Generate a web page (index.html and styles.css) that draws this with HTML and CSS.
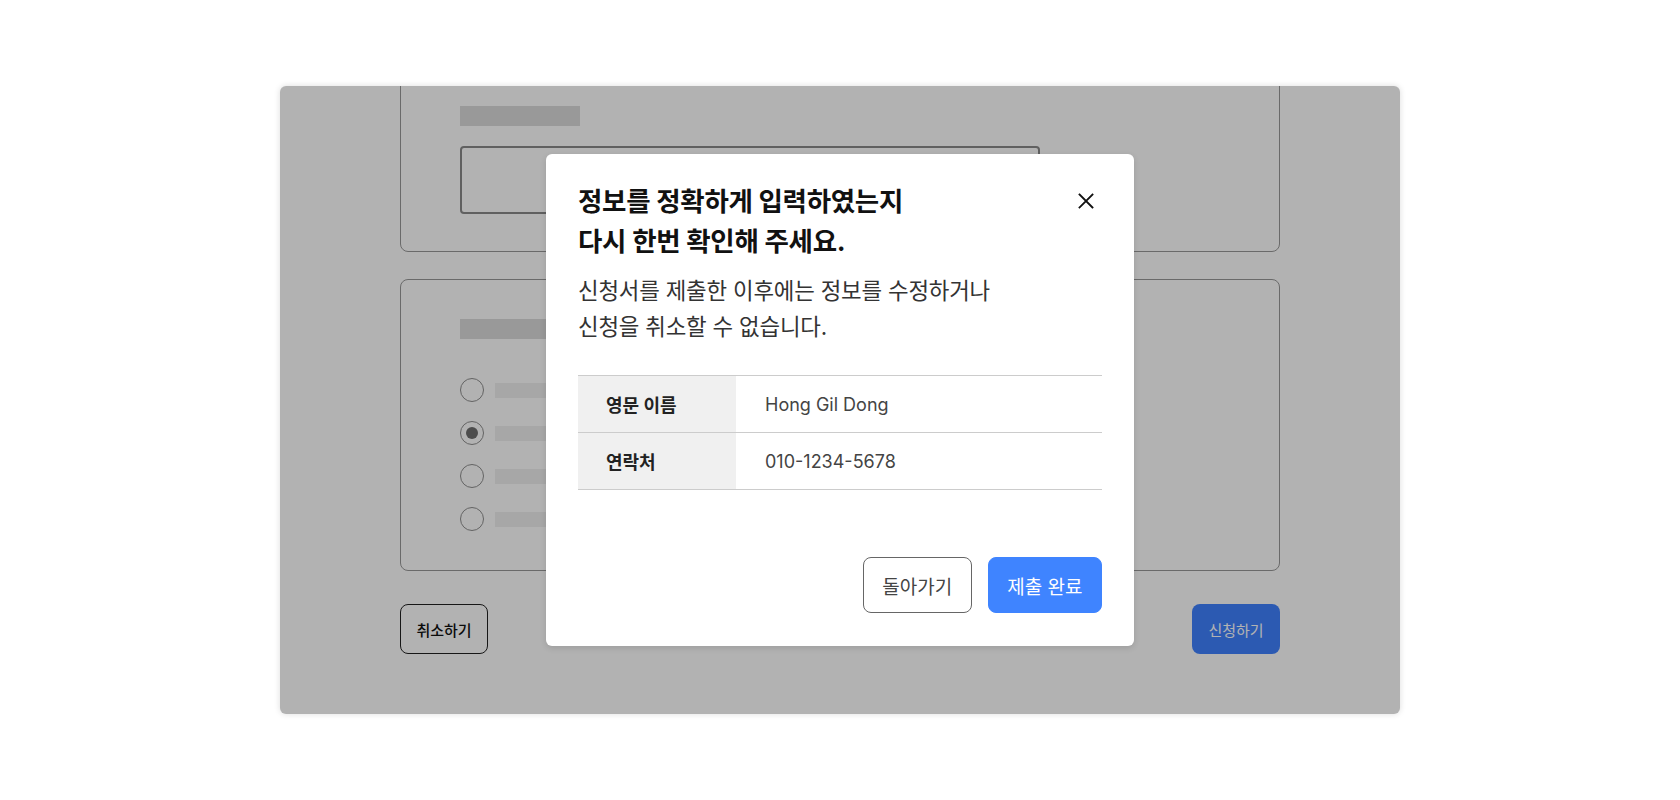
FILE: index.html
```html
<!DOCTYPE html>
<html lang="ko">
<head>
<meta charset="utf-8">
<title>신청서 제출 확인</title>
<link rel="stylesheet" href="styles.css">
</head>
<body>
<div class="frame">
  <div class="page">
    <section class="card card-input">
      <div class="skel-label"></div>
      <div class="skel-input"></div>
    </section>
    <section class="card card-radios">
      <div class="skel-label"></div>
      <div class="radio-list">
        <div class="radio-row"><span class="radio"></span><span class="radio-text"></span></div>
        <div class="radio-row"><span class="radio is-checked"></span><span class="radio-text"></span></div>
        <div class="radio-row"><span class="radio"></span><span class="radio-text"></span></div>
        <div class="radio-row"><span class="radio"></span><span class="radio-text"></span></div>
      </div>
    </section>
    <div class="page-actions">
      <button class="btn-sm btn-sm-outline" type="button">취소하기</button>
      <button class="btn-sm btn-sm-primary" type="button">신청하기</button>
    </div>
  </div>
  <div class="overlay">
    <div class="modal" role="dialog">
      <div class="modal-head">
        <h2 class="modal-title">정보를 정확하게 입력하였는지<br>다시 한번 확인해 주세요.</h2>
        <button class="modal-close" type="button" aria-label="닫기">
          <svg width="16" height="16" viewBox="0 0 16 16" fill="none" stroke="#111" stroke-width="1.8" stroke-linecap="square"><path d="M1.5 1.5 L14.5 14.5 M14.5 1.5 L1.5 14.5"/></svg>
        </button>
      </div>
      <p class="modal-desc">신청서를 제출한 이후에는 정보를 수정하거나<br>신청을 취소할 수 없습니다.</p>
      <table class="info-table">
        <tr><th>영문 이름</th><td>Hong Gil Dong</td></tr>
        <tr><th>연락처</th><td>010-1234-5678</td></tr>
      </table>
      <div class="modal-actions">
        <button class="btn btn-outline" type="button">돌아가기</button>
        <button class="btn btn-primary" type="button">제출 완료</button>
      </div>
    </div>
  </div>
</div>
</body>
</html>
```
FILE: styles.css
```css
* { box-sizing: border-box; }
html, body { margin: 0; padding: 0; }
body {
  height: 800px;
  background: #fff;
  font-family: Inter, "Noto Sans CJK KR", sans-serif;
  display: flex;
  align-items: center;
  justify-content: center;
}
.frame {
  position: relative;
  width: 1120px;
  height: 628px;
  border-radius: 6px;
  overflow: hidden;
  background: #fff;
  box-shadow: 0 0 6px rgba(0, 0, 0, 0.14);
}
.page {
  height: 100%;
  display: flex;
  flex-direction: column;
  justify-content: flex-end;
  padding: 0 120px 60px;
}
.card {
  flex: none;
  border: 1px solid #999;
  border-radius: 8px;
  padding: 39px 59px;
}
.card-input { padding-bottom: 37px; }
.card-radios { margin-top: 27px; }
.skel-label {
  width: 120px;
  height: 20px;
  background: #dbdbdb;
}
.skel-input {
  margin-top: 20px;
  width: 580px;
  height: 68px;
  border: 2px solid #8a8a8a;
  border-radius: 4px;
}
.radio-list {
  margin-top: 39px;
  display: flex;
  flex-direction: column;
  gap: 19px;
}
.radio-row {
  display: flex;
  align-items: center;
  gap: 11px;
}
.radio {
  width: 24px;
  height: 24px;
  border: 1.5px solid #8f8f8f;
  border-radius: 50%;
  display: flex;
  align-items: center;
  justify-content: center;
}
.radio.is-checked::after {
  content: "";
  width: 12px;
  height: 12px;
  border-radius: 50%;
  background: #6e6e6e;
}
.radio-text {
  width: 220px;
  height: 15px;
  background: #f0f0f0;
}
.page-actions {
  flex: none;
  margin-top: 33px;
  display: flex;
  justify-content: space-between;
}
.btn-sm {
  width: 88px;
  height: 50px;
  border-radius: 8px;
  font-family: inherit;
  font-size: 15px;
  font-weight: 500;
}
.btn-sm-outline { background: #fff; border: 1px solid #222; color: #111; }
.btn-sm-primary { background: #3f82ff; border: 0; color: #fff; font-weight: 400; }

.overlay {
  position: absolute;
  inset: 0;
  background: rgba(0, 0, 0, 0.3);
  display: flex;
  align-items: center;
  justify-content: center;
}
.modal {
  width: 588px;
  background: #fff;
  border-radius: 6px;
  padding: 27px 32px 33px;
  box-shadow: 0 2px 6px rgba(0, 0, 0, 0.12);
}
.modal-head {
  display: flex;
  justify-content: space-between;
  align-items: flex-start;
}
.modal-title {
  margin: 0;
  font-size: 26.5px;
  line-height: 40px;
  font-weight: 700;
  color: #111;
  letter-spacing: -0.3px;
}
.modal-close {
  width: 32px;
  height: 40px;
  padding: 0;
  border: 0;
  background: none;
  display: flex;
  align-items: center;
  justify-content: center;
}
.modal-desc {
  margin: 12px 0 0;
  font-size: 22.4px;
  line-height: 36px;
  color: #333;
  letter-spacing: -0.2px;
}
.info-table {
  margin-top: 30px;
  width: 100%;
  border-collapse: collapse;
  border-top: 1px solid #ccc;
}
.info-table tr { border-bottom: 1px solid #ccc; }
.info-table th,
.info-table td {
  height: 57px;
  padding: 0 28px;
  font-size: 18px;
  text-align: left;
  vertical-align: middle;
}
.info-table th {
  width: 158px;
  background: #f0f0f0;
  font-weight: 700;
  color: #222;
}
.info-table td {
  padding-left: 29px;
  font-weight: 400;
  color: #444;
}
.modal-actions {
  margin-top: 67px;
  display: flex;
  justify-content: flex-end;
  gap: 16px;
}
.btn {
  height: 56px;
  padding: 0 18.5px;
  border-radius: 8px;
  font-family: inherit;
  font-size: 19px;
  font-weight: 400;
}
.btn-outline { background: #fff; border: 1px solid #666; color: #444; }
.btn-primary { background: #3f84ff; border: 1px solid #3f84ff; color: #fff; }
```
